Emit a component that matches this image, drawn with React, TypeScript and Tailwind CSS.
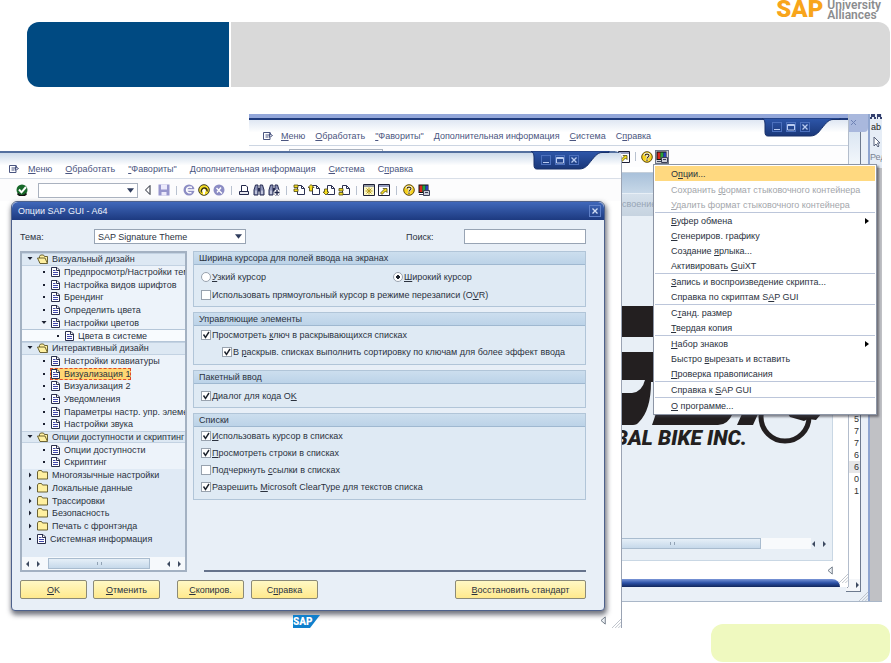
import type { ReactNode } from 'react'

type TreeIcon = 'open' | 'closed' | 'doc'

interface TreeItem {
  label: string
  level: 0 | 1 | 2
  icon: TreeIcon
  state?: 'expanded' | 'collapsed'
  selected?: boolean
}

interface MenuEntry {
  label: string
  disabled?: boolean
  active?: boolean
  submenu?: boolean
  divider?: boolean
}

const menuBar = ['&Меню', '&Обработать', '&"Фавориты"', '&Дополнительная информация', '&Система', 'С&правка']

const tree: TreeItem[] = [
  { label: 'Визуальный дизайн', level: 0, icon: 'open', state: 'expanded' },
  { label: 'Предпросмотр/Настройки темы', level: 1, icon: 'doc' },
  { label: 'Настройка видов шрифтов', level: 1, icon: 'doc' },
  { label: 'Брендинг', level: 1, icon: 'doc' },
  { label: 'Определить цвета', level: 1, icon: 'doc' },
  { label: 'Настройки цветов', level: 1, icon: 'doc', state: 'expanded' },
  { label: 'Цвета в системе', level: 2, icon: 'doc' },
  { label: 'Интерактивный дизайн', level: 0, icon: 'open', state: 'expanded' },
  { label: 'Настройки клавиатуры', level: 1, icon: 'doc' },
  { label: 'Визуализация 1', level: 1, icon: 'doc', selected: true },
  { label: 'Визуализация 2', level: 1, icon: 'doc' },
  { label: 'Уведомления', level: 1, icon: 'doc' },
  { label: 'Параметры настр. упр. элементов', level: 1, icon: 'doc' },
  { label: 'Настройки звука', level: 1, icon: 'doc' },
  { label: 'Опции доступности и скриптинг', level: 0, icon: 'open', state: 'expanded' },
  { label: 'Опции доступности', level: 1, icon: 'doc' },
  { label: 'Скриптинг', level: 1, icon: 'doc' },
  { label: 'Многоязычные настройки', level: 0, icon: 'closed', state: 'collapsed' },
  { label: 'Локальные данные', level: 0, icon: 'closed', state: 'collapsed' },
  { label: 'Трассировки', level: 0, icon: 'closed', state: 'collapsed' },
  { label: 'Безопасность', level: 0, icon: 'closed', state: 'collapsed' },
  { label: 'Печать с фронтэнда', level: 0, icon: 'closed', state: 'collapsed' },
  { label: 'Системная информация', level: 0, icon: 'doc' }
]

const contextMenu: MenuEntry[] = [
  { label: 'О&пции...', active: true },
  { label: 'Сохранить &формат стыковочного контейнера', disabled: true },
  { label: '&Удалить формат стыковочного контейнера', disabled: true },
  { label: '&Буфер обмена', submenu: true, divider: true },
  { label: '&Сгенериров. графику' },
  { label: 'Создание &ярлыка...' },
  { label: 'Активировать &GuiXT' },
  { label: '&Запись и воспроизведение скрипта...', divider: true },
  { label: 'Справка по скриптам S&AP GUI' },
  { label: 'С&танд. размер', divider: true },
  { label: '&Твердая копия' },
  { label: '&Набор знаков', submenu: true, divider: true },
  { label: 'Быстро &вырезать и вставить' },
  { label: '&Проверка правописания' },
  { label: 'Справка к &SAP GUI', divider: true },
  { label: '&О программе...', divider: true }
]

/** Text with an access key: the letter after "&" is underlined */
function Label({ text }: { text: string }) {
  const at = text.indexOf('&')
  if (at < 0) return <span>{text}</span>
  return (
    <span>
      {text.slice(0, at)}
      <u className="underline-offset-1">{text[at + 1]}</u>
      {text.slice(at + 2)}
    </span>
  )
}

function Icon({ children }: { children: ReactNode }) {
  return (
    <svg viewBox="0 0 12 12" className="size-3 shrink-0" fill="none">
      {children}
    </svg>
  )
}

function Binoculars({ plus }: { plus?: boolean }) {
  return (
    <Icon>
      <path d="M1 11V6L2.500 1h2.500v10zM7 11V1h2.500L11 6v5z" fill="#8d93b8" stroke="#262c52" />
      <path d="M5 4h2v3.500H5z" fill="#262c52" />
      <path d="M3 6.500V10M9 6.500V10" stroke="#f2f4fc" />
      {plus && (
        <>
          <circle cx="9" cy="8.500" r="3" fill="#fff" />
          <path d="M9 6v5M6.500 8.500h5" stroke="#1d2348" strokeWidth="1.300" />
        </>
      )}
    </Icon>
  )
}

function PageIcon({ arrow }: { arrow: string }) {
  return (
    <Icon>
      <path d="M4.500 1.500h4l3 3v6h-7z" fill="#fff" stroke="#2b3052" />
      <path d="M8.500 1.500v3h3" stroke="#2b3052" />
      <path d={arrow} fill="#f6dc1e" stroke="#4d4812" strokeWidth=".8" />
    </Icon>
  )
}

function MonitorIcon() {
  return (
    <Icon>
      <path d="M.5.5h10v8.500H.5z" fill="#111" />
      <path d="M1.500 1.500h3v6.500h-3z" fill="#d8261c" />
      <path d="M4.500 1.500h3v6.500h-3z" fill="#23a43a" />
      <path d="M7.500 1.500h2.500v6.500H7.500z" fill="#2b3fbb" />
      <path d="M5.500 6.500h6v5h-6z" fill="#c9ccd8" stroke="#3b3f55" />
      <path d="M7 8.500h3M1 10.500h4" stroke="#3b3f55" />
    </Icon>
  )
}

function HelpIcon() {
  return (
    <Icon>
      <circle cx="6" cy="6" r="5.300" fill="#f7d21c" stroke="#5e4a10" />
      <path d="M4 4.700C4 2.500 8 2.500 8 4.600 8 6 6 5.900 6 7.500M6 8.600v1.300" stroke="#fff" strokeWidth="2.600" />
      <path d="M4 4.700C4 2.500 8 2.500 8 4.600 8 6 6 5.900 6 7.500M6 8.600v1.300" stroke="#3d3008" strokeWidth="1.200" />
    </Icon>
  )
}

function MenuBar({ compact }: { compact?: boolean }) {
  return (
    <nav
      className={
        compact
          ? 'flex h-[26px] items-center gap-[10px] border-b border-[#ccd5e2] bg-linear-to-b from-[#dfe7f3] via-white to-white pt-[6px] pl-[13px] text-[#4a5580]'
          : 'flex h-[26px] items-center gap-[13px] border-b border-[#d9dfe8] bg-linear-to-b from-[#ccdaea] via-white to-white pt-[6px] pl-2 text-[#4a5580]'
      }
    >
      <svg viewBox="0 0 12 10" className={compact ? '-mr-[3px] h-[10px] w-3' : '-mr-[5px] h-[10px] w-3'} fill="none" stroke="#4a5580">
        <path d="M8 1.500H1.500v7H8v-2M3.500 4h5M3.500 6h3M8.500 1.500v2M7.500 2.500l3 2-3 2z" />
      </svg>
      {menuBar.map((item) => (
        <button key={item} type="button" className="whitespace-nowrap">
          <Label text={item} />
        </button>
      ))}
    </nav>
  )
}

function Divider({ compact }: { compact?: boolean }) {
  return <span className={compact ? 'mx-[2px] h-[9px] w-px bg-[#b9c2d0]' : 'mx-[3px] h-[9px] w-px bg-[#b9c2d0]'} />
}

function DropArrow() {
  return (
    <svg viewBox="0 0 8 5" className="mr-1 h-[5px] w-[7px] self-center justify-self-end [grid-area:1/1]">
      <path d="M0 0h8L4 5z" fill="#2f3c5c" />
    </svg>
  )
}

function Toolbar({ compact, pressed }: { compact?: boolean; pressed?: boolean }) {
  return (
    <div
      role="toolbar"
      className={
        compact
          ? 'flex h-[21px] items-center gap-[3px] bg-[#fdfdfe] pl-[20px]'
          : 'flex h-[22px] items-center gap-[3px] bg-[#fcfcfd] pl-4'
      }
    >
      <Icon>
        <circle cx="6" cy="6" r="5.500" fill="#17682a" />
        <path d="M1.500 9.500a5.500 5.500 0 0 0 9 0" stroke="#111" strokeWidth="1.500" />
        <path d="M3 5.500l2.500 2.800L10 3" stroke="#fff" strokeWidth="2" />
      </Icon>
      <div className={compact ? 'mx-[5px] grid w-[94px]' : 'mr-px ml-[7px] grid w-[100px]'}>
        <select aria-label="Код транзакции" className="h-[15px] w-full appearance-none border border-[#aab2bf] bg-white [grid-area:1/1]" />
        <DropArrow />
      </div>
      <Icon>
        <path d="M8 1.500v9L3.500 6z" stroke="#1f2430" />
      </Icon>
      <span className={compact ? '' : 'ml-px'}>
        <Icon>
          <path d="M.5.500h11v11H.5z" fill="#9695cc" />
          <path d="M3 .5h6v5H3zM3.500 8h5v3.500h-5z" fill="#eceafb" />
        </Icon>
      </span>
      <Divider compact={compact} />
      <Icon>
        <circle cx="6" cy="6" r="5.500" fill="#8c8dc4" />
        <path d="M9 3.500C6 2 3.500 4 3.500 6S6 9.500 8.500 8.500M4 6h8" stroke="#fff" strokeWidth="1.400" />
      </Icon>
      <Icon>
        <circle cx="6" cy="6" r="5.300" fill="#f4dc24" stroke="#3c3a1c" />
        <path d="M3.500 8.500C2 3 10 2.500 9 7.500" stroke="#2c2b14" strokeWidth="1.400" />
        <path d="M6 4.500l2.500 3h-5zM5 7h2v3.500H5z" fill="#fff" />
      </Icon>
      <Icon>
        <circle cx="6" cy="6" r="5.500" fill="#8c8dc4" />
        <path d="M3.500 4l5.500 5.500M8 3.500L4 8.500" stroke="#fff" strokeWidth="1.400" />
      </Icon>
      <Divider compact={compact} />
      <Icon>
        <path d="M3.500 7V1.500H8L9.500 3v4" fill="#fff" stroke="#23284a" />
        <path d="M1.500 7.500h9v3h-9z" fill="#e7e7ee" stroke="#23284a" />
      </Icon>
      <Binoculars />
      <Binoculars plus />
      <Divider compact={compact} />
      <PageIcon arrow="M1 1h4v2.500H1zM1 5h4v2.500H1z" />
      <PageIcon arrow="M3 .5l3 3H4.500V7h-3V3.500H0z" />
      <PageIcon arrow="M3 11L0 8h1.500V5h3v3H6z" />
      <PageIcon arrow="M1 4.500h4V7H1zM1 8.500h4V11H1z" />
      <Divider compact={compact} />
      <Icon>
        <path d="M.5.500h11v11H.5z" fill="#fbf7c8" stroke="#1d2036" />
        <path d="M1 1.500h10v1H1z" fill="#2d3c80" />
        <path d="M6 3.500v7M2.500 7h7M3.500 4.500l5 5M8.500 4.500l-5 5" stroke="#b79a18" />
      </Icon>
      <Icon>
        <path d="M.5.500h11v11H.5z" fill="#fff" stroke="#1d2036" />
        <path d="M1 1.500h10v1H1z" fill="#2d3c80" />
        <path d="M5 4.500h4v4L7.500 7 4 10.500 2.500 9 6 5.500z" fill="#f6dc1e" stroke="#4d4812" strokeWidth=".8" />
      </Icon>
      <Divider compact={compact} />
      <HelpIcon />
      <button type="button" aria-label="Настройка локального формата" className={pressed ? 'bg-[#cfd3da] outline outline-[#6f7687]' : ''}>
        <MonitorIcon />
      </button>
    </div>
  )
}

/** Dark tab with the minimise, maximise and close buttons */
function WindowTab() {
  return (
    <div className="grid h-5 w-[90px]">
      <svg viewBox="0 0 90 20" className="h-5 w-[90px] [grid-area:1/1]">
        <defs>
          <linearGradient id="tab" x1="0" y1="0" x2="0" y2="1">
            <stop offset="0" stopColor="#2e57ab" />
            <stop offset="1" stopColor="#1a3778" />
          </linearGradient>
        </defs>
        <path d="M0 0h78v1.500h-7c-5 0-8 5-13 11-3 4-6 5.500-10 5.500H6C4 18 3 17 3 14V6C3 3 2 1 0 0z" fill="url(#tab)" stroke="#18316b" />
      </svg>
      <div className="flex gap-1 pt-1 pl-[10px] [grid-area:1/1]">
        <button type="button" aria-label="Свернуть" className="size-[10px] border border-[#4c70bd]">
          <svg viewBox="0 0 8 8" className="size-2" stroke="#b9cbf0"><path d="M1 6.500h6" /></svg>
        </button>
        <button type="button" aria-label="Развернуть" className="size-[10px] border border-[#4c70bd]">
          <svg viewBox="0 0 8 8" className="size-2" stroke="#b9cbf0" fill="none"><path d="M.5 1.500h7v5.500h-7zM.5 2.500h7" /></svg>
        </button>
        <button type="button" aria-label="Закрыть" className="size-[10px] border border-[#4c70bd]">
          <svg viewBox="0 0 8 8" className="size-2" stroke="#b9cbf0" strokeWidth="1.300"><path d="M1.500 1.500l5 5M6.500 1.500l-5 5" /></svg>
        </button>
      </div>
    </div>
  )
}

function Grip() {
  return (
    <svg viewBox="0 0 10 10" className="size-[9px]" stroke="#b9bec6" fill="none">
      <path d="M0 10L10 0M3.500 10L10 3.500M7 10l3-3" />
    </svg>
  )
}

function TriangleLeft() {
  return (
    <svg viewBox="0 0 6 10" className="h-[9px] w-[6px]" fill="#eef2f6" stroke="#66727f">
      <path d="M5.500 1v8L.8 5z" />
    </svg>
  )
}

function ScrollArrows() {
  return (
    <svg viewBox="0 0 16 6" className="h-[6px] w-4 shrink-0" fill="#3d4a60">
      <path d="M4 0v6L1 3zM12 0v6l3-3z" />
    </svg>
  )
}

function TreeGlyph({ icon }: { icon: TreeIcon }) {
  if (icon === 'doc') {
    return (
      <svg viewBox="0 0 9 10" className="h-[10px] w-[9px] shrink-0" fill="none">
        <path d="M.5.500h5.500L8.500 3v6.500h-8z" fill="#fff" stroke="#2a2f4c" />
        <path d="M5.500.500v3h3" stroke="#2a2f4c" />
        <path d="M2 3.500h2.500M2 5.500h5M2 7.500h5" stroke="#4046a8" />
      </svg>
    )
  }
  return (
    <svg viewBox="0 0 11 10" className="h-[10px] w-[11px] shrink-0" fill="#fff0a0" stroke="#5c5322" strokeWidth=".9">
      {icon === 'open' ? (
        <>
          <path d="M2.500 8.500V2.500L3.500 1h3l1 1.500h3v6z" />
          <path d="M.5 4h7.500l2.500 5.500H3z" />
        </>
      ) : (
        <path d="M.5 9V2l1-1.500h3l1 1.500h5v7z" />
      )}
    </svg>
  )
}

function TreeMarker({ state }: { state?: 'expanded' | 'collapsed' }) {
  return (
    <svg viewBox="0 0 6 6" className="size-[6px] shrink-0" fill="#1b2030">
      {state === 'expanded' && <path d="M.5 1h5L3 4z" />}
      {state === 'collapsed' && <path d="M2 .5L4.500 3 2 5.500z" />}
      {!state && <path d="M2 2h2v2H2z" />}
    </svg>
  )
}

function rowClass(item: TreeItem) {
  const base = 'flex min-h-0 items-center overflow-hidden whitespace-nowrap'
  if (item.level === 2) return `${base} border-y border-[#b5c6d8] bg-[#f8fbfe] pl-[33px]`
  if (item.level === 1) return `${base} bg-[#edf3fa] pl-[19px]`
  if (item.icon === 'open') return `${base} border-y border-[#c3d2e2] bg-[#dde8f3] pl-[5px]`
  return `${base} pl-[5px]`
}

function Tree() {
  return (
    <div className="flex h-[321px] min-w-0 flex-col border-2 border-[#a3b1c2] bg-[#e0eaf5]">
      <ul className="grid h-[292px] grid-cols-1 auto-rows-fr">
        {tree.map((item) => (
          <li key={item.label} className={rowClass(item)}>
            <TreeMarker state={item.state} />
            <span
              className={
                item.selected
                  ? 'ml-[3px] flex h-3 items-center gap-1 bg-[#ffd773] px-px outline-1 -outline-offset-1 outline-[#e0482c] outline-dashed'
                  : 'ml-1 flex items-center gap-1'
              }
            >
              <TreeGlyph icon={item.icon} />
              {item.label}
            </span>
          </li>
        ))}
      </ul>
      <div className="mt-auto flex h-[13px] items-center gap-[3px] bg-[#f6f9fc] px-[3px]">
        <ScrollArrows />
        <div className="ml-1 grid h-[11px] w-[102px] place-items-center border border-[#a9bccf] bg-linear-to-b from-[#e6eff8] to-[#c6d9ea]">
          <span className="h-[3px] w-[5px] border-x border-[#92a3b5]" />
        </div>
        <div className="ml-auto">
          <ScrollArrows />
        </div>
      </div>
    </div>
  )
}

function Check({ label, checked, indent }: { label: string; checked?: boolean; indent?: boolean }) {
  return (
    <label className={indent ? 'ml-[21px] flex h-[14px] items-center gap-px' : 'flex h-[14px] items-center gap-px'}>
      <span className="grid size-[10px]">
        <input
          type="checkbox"
          defaultChecked={checked}
          className="peer size-[10px] appearance-none border border-[#98a2ae] bg-white [grid-area:1/1]"
        />
        <svg viewBox="0 0 10 10" className="pointer-events-none hidden size-[10px] [grid-area:1/1] peer-checked:block" fill="none" stroke="#1c222c" strokeWidth="1.400">
          <path d="M2.500 4.500l2 3L8 2" />
        </svg>
      </span>
      <Label text={label} />
    </label>
  )
}

function Radio({ label, checked }: { label: string; checked?: boolean }) {
  return (
    <label className="flex h-[14px] items-center gap-px">
      <input
        type="radio"
        name="cursor"
        defaultChecked={checked}
        className="size-[10px] appearance-none rounded-full border border-[#98a2ae] bg-white checked:bg-[radial-gradient(circle,#1c222c_2px,#ffffff_2px)]"
      />
      <Label text={label} />
    </label>
  )
}

function Group({ title, spacious, children }: { title: string; spacious?: boolean; children: ReactNode }) {
  return (
    <section className="border border-[#b1c5d8] bg-[#dfeaf4]">
      <h3 className="h-[13px] border-b border-[#9fb8d0] bg-linear-to-b from-[#ccdeee] to-[#bcd3e8] pl-[5px] leading-3">{title}</h3>
      <div className={spacious ? 'flex flex-col gap-1 pt-[5px] pb-1 pl-[7px]' : 'flex flex-col gap-[3px] pt-[2px] pb-[5px] pl-[7px]'}>
        {children}
      </div>
    </section>
  )
}

function YellowButton({ label, wide }: { label: string; wide?: boolean }) {
  return (
    <button
      type="button"
      className={
        wide
          ? 'ml-auto h-[19px] w-[131px] rounded-xs border border-[#8b8a78] bg-linear-to-b from-[#fff8c4] to-[#ffe98c]'
          : 'h-[19px] w-[67px] rounded-xs border border-[#8b8a78] bg-linear-to-b from-[#fff8c4] to-[#ffe98c]'
      }
    >
      <Label text={label} />
    </button>
  )
}

function OptionsDialog() {
  return (
    <section className="mr-4 ml-[11px] rounded-t-md rounded-b-sm border border-[#4d618c] bg-[#e8eff7] shadow-[1px_3px_5px_1px_rgba(40,45,60,0.65)]">
      <header className="flex h-[18px] items-center justify-between rounded-t-md bg-linear-to-b from-[#4068bb] to-[#1d3a80] pr-[3px] pl-[6px] text-[#eef3fc]">
        <h2>Опции SAP GUI - A64</h2>
        <button type="button" aria-label="Закрыть" className="grid size-3 place-items-center border border-[#5f80c8]">
          <svg viewBox="0 0 8 8" className="size-2" stroke="#d3dff5" strokeWidth="1.300"><path d="M1.500 1.500l5 5M6.500 1.500l-5 5" /></svg>
        </button>
      </header>
      <div className="pt-[9px] pr-[18px] pb-[11px] pl-2">
        <div className="mb-[7px] flex items-center">
          <label htmlFor="theme" className="w-[74px]">Тема:</label>
          <div className="grid w-[152px]">
            <select id="theme" className="h-[15px] w-full appearance-none border border-[#98a4b4] bg-white pl-[3px] leading-3 [grid-area:1/1]">
              <option>SAP Signature Theme</option>
            </select>
            <DropArrow />
          </div>
          <label htmlFor="search" className="ml-auto w-[58px]">Поиск:</label>
          <input id="search" type="text" className="h-[15px] w-[122px] border border-[#98a4b4] bg-white px-1" />
        </div>
        <div className="grid grid-cols-[167px_1fr] gap-[6px]">
          <Tree />
          <div className="flex flex-col gap-[5px]">
            <Group title="Ширина курсора для полей ввода на экранах" spacious>
              <div className="grid grid-cols-2">
                <Radio label="&Узкий курсор" />
                <Radio label="&Широкий курсор" checked />
              </div>
              <Check label="Использовать прямоугольный курсор в режиме перезаписи (O&VR)" />
            </Group>
            <Group title="Управляющие элементы">
              <Check label="Просмотреть &ключ в раскрывающихся списках" checked />
              <Check label="В &раскрыв. списках выполнить сортировку по ключам для более эффект ввода" checked indent />
            </Group>
            <Group title="Пакетный ввод" spacious>
              <Check label="Диалог для кода O&K" checked />
            </Group>
            <Group title="Списки">
              <Check label="&Использовать курсор в списках" checked />
              <Check label="&Просмотреть строки в списках" checked />
              <Check label="Подчеркнуть &ссылки в списках" />
              <Check label="Разрешить &Microsoft ClearType для текстов списка" checked />
            </Group>
            <hr className="mt-auto ml-[11px] border-t-2 border-[#66738c]" />
          </div>
        </div>
        <div className="mt-2 flex">
          <div className="flex gap-[6px]">
            <YellowButton label="&OK" />
            <YellowButton label="&Отменить" />
          </div>
          <div className="ml-[17px] flex gap-[7px]">
            <YellowButton label="&Скопиров." />
            <YellowButton label="С&правка" />
          </div>
          <YellowButton label="&Восстановить стандарт" wide />
        </div>
      </div>
    </section>
  )
}

function FrontWindow() {
  return (
    <article className="absolute top-[37px] right-[269px] left-0 rounded-tr-lg border-t-2 border-r border-t-[#54709f] border-r-[#9aa3b3] bg-white">
      <MenuBar />
      <Toolbar />
      <OptionsDialog />
      <footer className="flex h-[17px] items-end pl-[293px]">
        <svg viewBox="0 0 27 13" className="h-[13px] w-[27px]">
          <path d="M0 0h27L17 13H0z" fill="#1080cc" />
          <text x="0" y="10" fontSize="10" fontWeight="900" fill="#fff" className="[font-family:Roboto,sans-serif]">SAP</text>
        </svg>
        <span className="mb-[3px] ml-auto">
          <TriangleLeft />
        </span>
        <span className="ml-[6px]">
          <Grip />
        </span>
      </footer>
      <div className="absolute -top-0.5 right-0">
        <WindowTab />
      </div>
    </article>
  )
}

/** Part of the Global Bike logo that the menu leaves uncovered */
function BikeLogo() {
  return (
    <svg viewBox="615 300 219 150" className="ml-auto h-[150px] w-[219px]" fill="#231f20">
      <path d="M615 306h60v31h-60zM615 352h60v30h-22q0 28-12 40-2 3-6 3h-20z" />
      <path d="M615 380h32q-3 12-13 13h-19z" fill="#e8eff6" />
      <path d="M661 405h78l-4 8q-5 12-15 12h-66zM748 405h16l-9 20h-16z" />
      <circle cx="787" cy="417" r="24" fill="none" stroke="#231f20" strokeWidth="5" />
      <path d="M788 411l10 3h22l8-6-10 12-8-1-4 2-14-4z" />
      <text x="749" y="445" textAnchor="end" fontSize="21" fontWeight="900" fontStyle="italic" className="[font-family:Roboto,sans-serif]">BAL BIKE INC.</text>
    </svg>
  )
}

function BackWindow() {
  return (
    <article className="absolute top-0 right-[42px] left-[249px] flex h-[473px] flex-col overflow-hidden border-r border-[#b3bdcc] bg-white">
      <div className="h-[6px] shrink-0 border-b-2 border-[#1f3b7c] bg-[#93a7da]" />
      <MenuBar compact />
      <Toolbar compact pressed />
      <div className="mr-[15px] flex flex-1 flex-col border-r border-b border-[#c9d7e4] bg-[#e8eff6]">
        <div className="h-[6px] border-b border-[#c5cfda] bg-white" />
        <div className="h-5 bg-linear-to-b from-[#a9c1da] to-[#c7d8e8]" />
        <div className="mt-px h-[22px] bg-linear-to-b from-[#d6e1ec] to-[#c6d3e0] pl-[373px] leading-5 text-[#98a5b5]">своение</div>
        <div className="mt-[84px]">
          <BikeLogo />
        </div>
        <div className="mt-auto mr-[5px] mb-[11px] flex h-[11px] items-center">
          <div className="grid h-[11px] w-[512px] place-items-center border border-[#a9bccf] bg-linear-to-b from-[#e6eff8] to-[#c6d9ea]">
            <span className="ml-[334px] h-[3px] w-[5px] border-x border-[#92a3b5]" />
          </div>
          <div className="h-full flex-1 bg-[#f8fafc]" />
          <ScrollArrows />
        </div>
      </div>
      <div className="flex h-[18px] items-center justify-end pr-[15px]">
        <TriangleLeft />
      </div>
      <div className="mr-2 h-2 shrink-0 rounded-tr-lg bg-linear-to-b from-[#7c97d8] via-[#2a4fa5] to-[#12275c]" />
      <div className="absolute right-0 bottom-1">
        <Grip />
      </div>
      <div className="absolute top-1 -right-1">
        <WindowTab />
      </div>
    </article>
  )
}

function DesktopWindow() {
  return (
    <article className="absolute top-0 right-[9px] left-[249px] flex h-[488px] justify-end border-b border-[#aab7c8] bg-[#eaf0f7]">
      <div className="flex w-[22px] flex-col">
        <div className="flex h-[18px] items-center rounded-br-sm bg-[#a9b8dd] pl-1">
          <svg viewBox="0 0 8 8" className="size-2" stroke="#6f83b5"><path d="M1 1l5 5M6 1L1 6" /></svg>
        </div>
        <div className="mr-[7px] flex h-[461px] flex-col border-r border-b border-[#6d7a8e] bg-white leading-3 text-[#333]">
          <div className="h-[35px] border-b border-[#c4d0de] bg-linear-to-b from-[#dbe6f2] to-[#f4f8fc]" />
          <div className="h-[246px]" />
          {['5', '7', '7', '6', '6', '0', '1'].map((digit, i) => (
            <span key={i} className={i === 4 ? 'h-3 bg-[#e6e6e8] pl-2' : 'h-3 pl-2'}>{digit}</span>
          ))}
          <div className="mt-auto flex h-3 justify-end bg-[#f4f6f9] pt-[3px]">
            <ScrollArrows />
          </div>
        </div>
        <div className="flex justify-end">
          <Grip />
        </div>
      </div>
      <div className="flex w-[14px] flex-col overflow-hidden border-l-2 border-[#8fa5cf] bg-[#c0c1c5]">
        <div className="flex h-[54px] shrink-0 flex-col gap-[3px] bg-[#e6edf6] text-[#7a8494]">
          <svg viewBox="0 0 12 5" className="h-[5px] w-3" fill="#34406e"><path d="M1 0h4v3H1zM7 0h4v3H7zM0 3h2v2H0zM4 3h2v2H4zM7 3h1v2H7zM10 3h2v2h-2z" /></svg>
          <span className="h-[11px] pl-px leading-[11px] text-[#222]">ab</span>
          <svg viewBox="0 0 12 12" className="size-3" fill="#fff" stroke="#56617a"><path d="M4 1v9l2-2 2 3 1-1-1.500-3H10z" /></svg>
          <span className="leading-3">Ред</span>
        </div>
      </div>
    </article>
  )
}

function ContextMenu() {
  return (
    <ul
      role="menu"
      className="absolute top-[50px] right-[14px] w-[224px] border border-[#8c95a5] bg-white p-px whitespace-nowrap shadow-[2px_2px_2px_rgba(60,60,70,0.6)]"
    >
      {contextMenu.map((entry) => (
        <li key={entry.label} role="none" className={entry.divider ? 'border-t border-[#bcc6da]' : ''}>
          <button
            type="button"
            role="menuitem"
            disabled={entry.disabled}
            className={
              entry.active
                ? 'mb-px flex h-[15px] w-full items-center bg-[#ffd980] pl-4 text-left'
                : 'flex h-[15px] w-full items-center justify-between pr-[6px] pl-4 text-left disabled:text-[#a3a6ab]'
            }
          >
            <Label text={entry.label} />
            {entry.submenu && (
              <svg viewBox="0 0 4 6" className="h-[6px] w-1"><path d="M0 0l4 3-4 3z" /></svg>
            )}
          </button>
        </li>
      ))}
    </ul>
  )
}

export default function App() {
  return (
    <main className="flex min-h-screen flex-col overflow-hidden bg-white text-[9px] leading-3 text-[#2b323e] [font-family:'Liberation_Sans',Arial,sans-serif]">
      <div className="flex h-[22px] items-start justify-end gap-1 pr-[10px] [font-family:Roboto,sans-serif]">
        <span className="text-[24px] leading-[18px] font-black text-[#f8a51b]">SAP</span>
        <span className="flex flex-col text-[12px] leading-[10px] font-semibold text-[#8b8c8e]">
          <span>University</span>
          <span>Alliances</span>
        </span>
      </div>
      <header className="flex h-[65px] gap-[2px] pr-px pl-[27px]">
        <div className="w-[202px] rounded-l-xl bg-[#004a82]" />
        <div className="flex-1 rounded-r-xl bg-[#d9d9d9]" />
      </header>
      <div className="relative mt-[27px] h-[510px]">
        <DesktopWindow />
        <BackWindow />
        <FrontWindow />
        <ContextMenu />
      </div>
      <footer className="flex justify-end pr-px">
        <div className="h-[38px] w-[179px] rounded-xl bg-[#eff9bf]" />
      </footer>
    </main>
  )
}
